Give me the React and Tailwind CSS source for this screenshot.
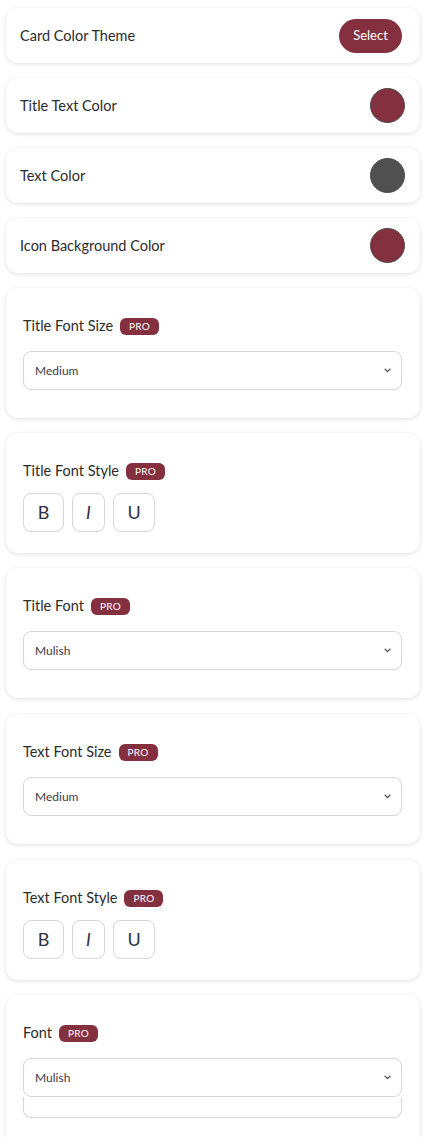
import React from "react";

const MAROON = "bg-[#84303f]";

function SimpleRow({ label, children }) {
  return (
    <div className="flex h-[55px] items-center justify-between rounded-xl bg-white pl-[14px] pr-[15px] shadow-[0_1px_4px_rgba(0,0,0,0.13)]">
      <span className="text-[14.5px] text-[#2b2b2b]">{label}</span>
      {children}
    </div>
  );
}

function Swatch({ color }) {
  return <div className={`h-[35px] w-[35px] rounded-full border border-[#4a4a4a] ${color}`} />;
}

function Label({ children }) {
  return (
    <div className="flex h-[20px] items-center gap-[7px]">
      <span className="text-[14.5px] text-[#2b2b2b]">{children}</span>
      <span className={`flex h-[17px] w-[39px] items-center justify-center rounded-md ${MAROON} text-[10px] tracking-wide text-white`}>
        PRO
      </span>
    </div>
  );
}

function Chevron() {
  return (
    <svg width="7" height="5" viewBox="0 0 7 5" fill="none">
      <path d="M1 1.2 L3.5 3.7 L6 1.2" stroke="#3a3a4a" strokeWidth="1.2" strokeLinecap="round" strokeLinejoin="round" />
    </svg>
  );
}

function SelectBox({ value }) {
  return (
    <div className="flex h-[39px] items-center justify-between rounded-lg border border-[#d6d6d6] bg-white pl-[11px] pr-[10px]">
      <span className="text-[12px] text-[#3a3a4a]">{value}</span>
      <Chevron />
    </div>
  );
}

function SelectSection({ label, value, className = "" }) {
  return (
    <div className={`rounded-xl bg-white pb-[28px] pl-[17px] pr-[18px] pt-[28px] shadow-[0_1px_4px_rgba(0,0,0,0.13)] ${className}`}>
      <Label>{label}</Label>
      <div className="mt-[15px]">
        <SelectBox value={value} />
      </div>
    </div>
  );
}

function StyleSection({ label, className = "" }) {
  return (
    <div className={`rounded-xl bg-white pb-[21px] pl-[17px] pr-[18px] pt-[28px] shadow-[0_1px_4px_rgba(0,0,0,0.13)] ${className}`}>
      <Label>{label}</Label>
      <div className="mt-[12px] flex gap-[8px]">
        <button className="flex h-[39px] w-[41px] items-center justify-center rounded-lg border border-[#d6d6d6] text-[18px] text-[#2f3145]">
          B
        </button>
        <button className="flex h-[39px] w-[33px] items-center justify-center rounded-lg border border-[#d6d6d6] text-[18px] italic text-[#2f3145]">
          I
        </button>
        <button className="flex h-[39px] w-[42px] items-center justify-center rounded-lg border border-[#d6d6d6] text-[18px] text-[#2f3145]">
          U
        </button>
      </div>
    </div>
  );
}

export default function App() {
  return (
    <div className="min-h-screen bg-white pb-[20px] pl-[6px] pr-[5px] pt-[8px] font-['Lato','Noto_Sans',sans-serif]">
      <div className="flex flex-col gap-[15px]">
        <SimpleRow label="Card Color Theme">
          <button className={`mr-[3px] h-[34px] w-[63px] rounded-full ${MAROON} text-[13px] text-white`}>
            Select
          </button>
        </SimpleRow>
        <SimpleRow label="Title Text Color">
          <Swatch color="bg-[#84303f]" />
        </SimpleRow>
        <SimpleRow label="Text Color">
          <Swatch color="bg-[#505050]" />
        </SimpleRow>
        <SimpleRow label="Icon Background Color">
          <Swatch color="bg-[#84303f]" />
        </SimpleRow>

        <SelectSection label="Title Font Size" value="Medium" />
        <StyleSection label="Title Font Style" />
        <SelectSection label="Title Font" value="Mulish" />
        <SelectSection label="Text Font Size" value="Medium" className="mt-px" />
        <StyleSection label="Text Font Style" className="mt-px" />

        <div className="rounded-xl bg-white pb-[28px] pl-[17px] pr-[18px] pt-[28px] shadow-[0_1px_4px_rgba(0,0,0,0.13)]">
          <Label>Font</Label>
          <div className="mt-[15px]">
            <SelectBox value="Mulish" />
            <div className="h-[21px] rounded-b-lg border-x border-b border-[#d6d6d6]" />
          </div>
        </div>
      </div>
    </div>
  );
}
